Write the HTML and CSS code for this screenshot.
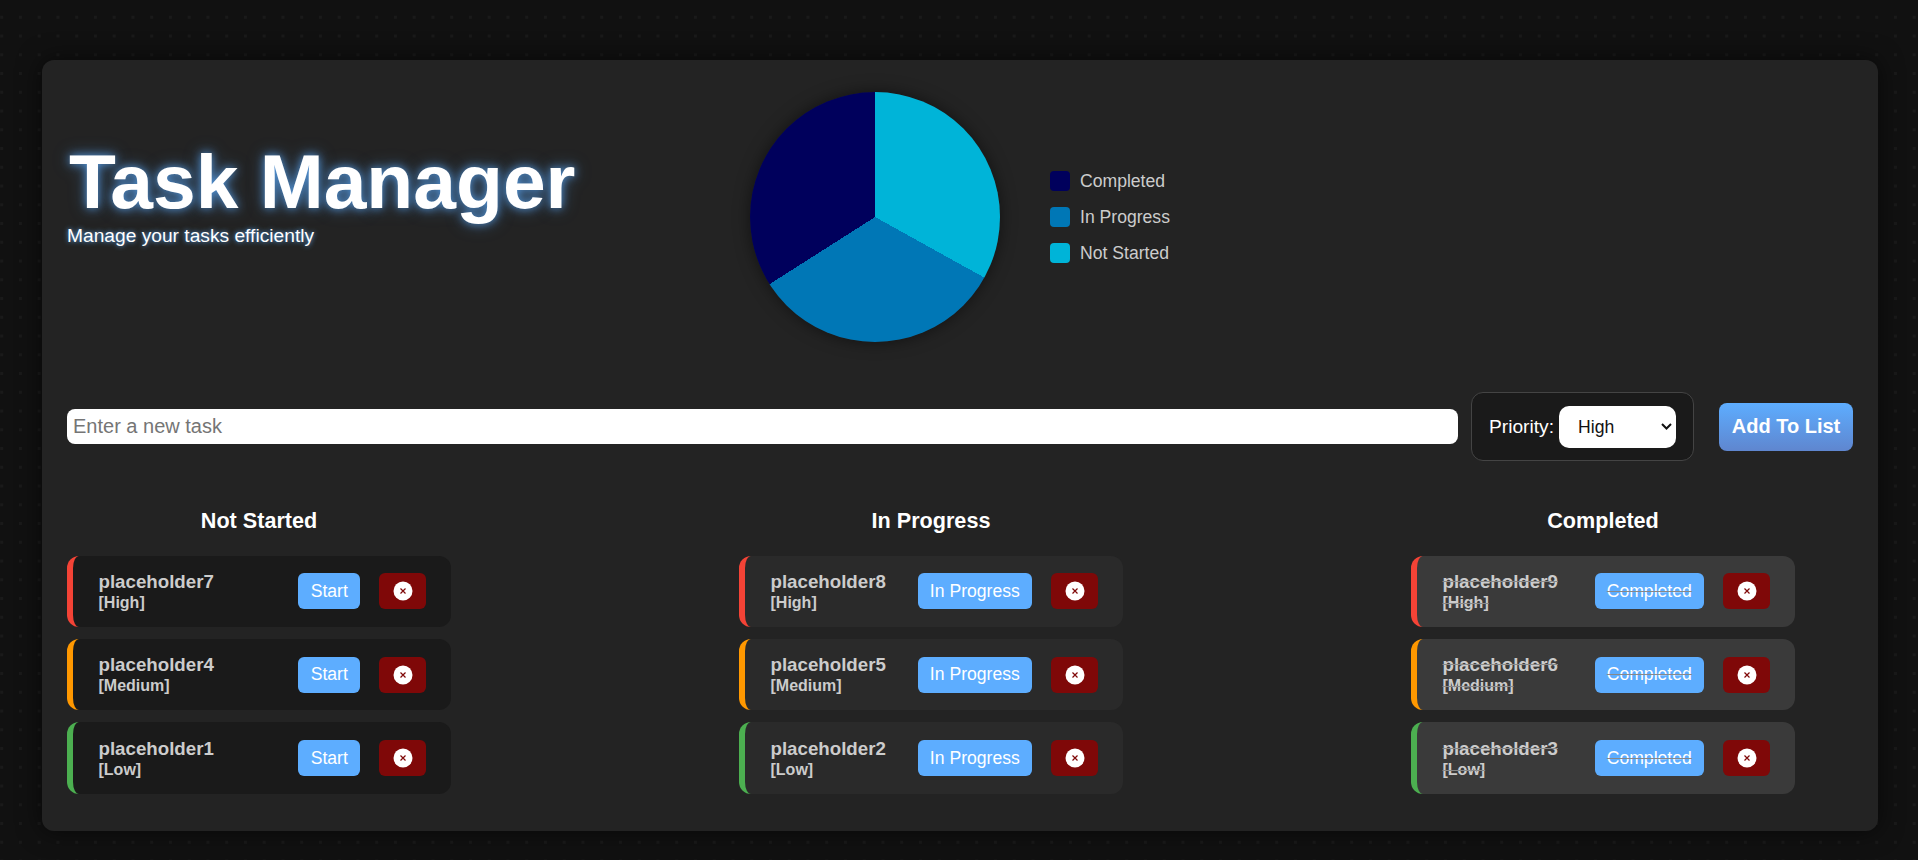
FILE: index.html
```html
<!DOCTYPE html>
<html lang="en">
<head>
    <meta charset="UTF-8">
    <meta name="viewport" content="width=device-width, initial-scale=1.0">
    <title>Task Manager</title>
    <link rel="stylesheet" href="styles.css">
</head>
<body>
    <div class="app-container">
        <header class="app-header">
            <div class="brand">
                <h1>Task Manager</h1>
                <p>Manage your tasks efficiently</p>
            </div>
            <div class="pie-chart"></div>
            <ul class="legend">
                <li><span class="swatch swatch-completed"></span>Completed</li>
                <li><span class="swatch swatch-progress"></span>In Progress</li>
                <li><span class="swatch swatch-new"></span>Not Started</li>
            </ul>
        </header>

        <form class="task-form">
            <input type="text" class="task-input" placeholder="Enter a new task">
            <div class="priority-box">
                <label for="priority">Priority:</label>
                <select id="priority">
                    <option>High</option>
                    <option>Medium</option>
                    <option>Low</option>
                </select>
            </div>
            <button type="button" class="add-btn">Add To List</button>
        </form>

        <div class="columns">
            <section class="column">
                <h2>Not Started</h2>
                <ul class="task-list">
                    <li class="task high">
                        <div class="task-text"><span class="task-name">placeholder7</span><span class="task-priority">[High]</span></div>
                        <button type="button" class="status-btn">Start</button>
                        <button type="button" class="delete-btn"><svg viewBox="0 0 20 20"><circle cx="10" cy="10" r="9.5" fill="#fff"/><path d="M7.5 7.5l5 5M12.5 7.5l-5 5" stroke="#7f0808" stroke-width="1.2"/></svg></button>
                    </li>
                    <li class="task medium">
                        <div class="task-text"><span class="task-name">placeholder4</span><span class="task-priority">[Medium]</span></div>
                        <button type="button" class="status-btn">Start</button>
                        <button type="button" class="delete-btn"><svg viewBox="0 0 20 20"><circle cx="10" cy="10" r="9.5" fill="#fff"/><path d="M7.5 7.5l5 5M12.5 7.5l-5 5" stroke="#7f0808" stroke-width="1.2"/></svg></button>
                    </li>
                    <li class="task low">
                        <div class="task-text"><span class="task-name">placeholder1</span><span class="task-priority">[Low]</span></div>
                        <button type="button" class="status-btn">Start</button>
                        <button type="button" class="delete-btn"><svg viewBox="0 0 20 20"><circle cx="10" cy="10" r="9.5" fill="#fff"/><path d="M7.5 7.5l5 5M12.5 7.5l-5 5" stroke="#7f0808" stroke-width="1.2"/></svg></button>
                    </li>
                </ul>
            </section>

            <section class="column in-progress">
                <h2>In Progress</h2>
                <ul class="task-list">
                    <li class="task high">
                        <div class="task-text"><span class="task-name">placeholder8</span><span class="task-priority">[High]</span></div>
                        <button type="button" class="status-btn">In Progress</button>
                        <button type="button" class="delete-btn"><svg viewBox="0 0 20 20"><circle cx="10" cy="10" r="9.5" fill="#fff"/><path d="M7.5 7.5l5 5M12.5 7.5l-5 5" stroke="#7f0808" stroke-width="1.2"/></svg></button>
                    </li>
                    <li class="task medium">
                        <div class="task-text"><span class="task-name">placeholder5</span><span class="task-priority">[Medium]</span></div>
                        <button type="button" class="status-btn">In Progress</button>
                        <button type="button" class="delete-btn"><svg viewBox="0 0 20 20"><circle cx="10" cy="10" r="9.5" fill="#fff"/><path d="M7.5 7.5l5 5M12.5 7.5l-5 5" stroke="#7f0808" stroke-width="1.2"/></svg></button>
                    </li>
                    <li class="task low">
                        <div class="task-text"><span class="task-name">placeholder2</span><span class="task-priority">[Low]</span></div>
                        <button type="button" class="status-btn">In Progress</button>
                        <button type="button" class="delete-btn"><svg viewBox="0 0 20 20"><circle cx="10" cy="10" r="9.5" fill="#fff"/><path d="M7.5 7.5l5 5M12.5 7.5l-5 5" stroke="#7f0808" stroke-width="1.2"/></svg></button>
                    </li>
                </ul>
            </section>

            <section class="column completed">
                <h2>Completed</h2>
                <ul class="task-list">
                    <li class="task high">
                        <div class="task-text"><span class="task-name">placeholder9</span><span class="task-priority">[High]</span></div>
                        <button type="button" class="status-btn">Completed</button>
                        <button type="button" class="delete-btn"><svg viewBox="0 0 20 20"><circle cx="10" cy="10" r="9.5" fill="#fff"/><path d="M7.5 7.5l5 5M12.5 7.5l-5 5" stroke="#7f0808" stroke-width="1.2"/></svg></button>
                    </li>
                    <li class="task medium">
                        <div class="task-text"><span class="task-name">placeholder6</span><span class="task-priority">[Medium]</span></div>
                        <button type="button" class="status-btn">Completed</button>
                        <button type="button" class="delete-btn"><svg viewBox="0 0 20 20"><circle cx="10" cy="10" r="9.5" fill="#fff"/><path d="M7.5 7.5l5 5M12.5 7.5l-5 5" stroke="#7f0808" stroke-width="1.2"/></svg></button>
                    </li>
                    <li class="task low">
                        <div class="task-text"><span class="task-name">placeholder3</span><span class="task-priority">[Low]</span></div>
                        <button type="button" class="status-btn">Completed</button>
                        <button type="button" class="delete-btn"><svg viewBox="0 0 20 20"><circle cx="10" cy="10" r="9.5" fill="#fff"/><path d="M7.5 7.5l5 5M12.5 7.5l-5 5" stroke="#7f0808" stroke-width="1.2"/></svg></button>
                    </li>
                </ul>
            </section>
        </div>
    </div>
</body>
</html>
```

FILE: styles.css
```css
* {
    margin: 0;
    padding: 0;
    box-sizing: border-box;
}

body {
    font-family: "Liberation Sans", Arial, sans-serif;
    background-color: #111;
    background-image: radial-gradient(circle, #1a1a1a 1.5px, transparent 2px);
    background-size: 18.75px 18.75px;
    background-position: -7.7px 7.9px;
    min-height: 100vh;
    padding: 60px 40px 29px 42px;
    color: #fff;
}

ul {
    list-style: none;
}

.app-container {
    background: #232323;
    border-radius: 12px;
    box-shadow: 0 0 24px rgba(0, 0, 0, 0.6);
    padding: 32px 25px 37px;
}

.app-header {
    display: flex;
    align-items: center;
}

.brand {
    width: 683px;
    margin-bottom: 51px;
}

.brand h1 {
    margin-left: 2px;
    font-size: 76.8px;
    font-weight: 700;
    line-height: 88px;
    text-shadow: 0 0 10px rgba(93, 173, 255, 0.8), 0 0 18px rgba(93, 173, 255, 0.35);
}

.brand p {
    font-size: 19.2px;
    text-shadow: 0 0 5px #5dadff;
}

.pie-chart {
    width: 250px;
    height: 250px;
    border-radius: 50%;
    background: conic-gradient(#00b4d8 0deg 119deg, #0077b6 119deg 237.5deg, #00005c 237.5deg 360deg);
    box-shadow: 0 0 16px rgba(0, 0, 0, 0.5);
}

.legend {
    margin-left: 50px;
    display: flex;
    flex-direction: column;
    gap: 16px;
    font-size: 17.6px;
    color: #ccc;
}

.legend li {
    display: flex;
    align-items: center;
    gap: 10px;
    height: 20px;
}

.swatch {
    width: 20px;
    height: 20px;
    border-radius: 4px;
}

.swatch-completed { background: #00005c; }
.swatch-progress { background: #0077b6; }
.swatch-new { background: #00b4d8; }

.task-form {
    display: flex;
    align-items: center;
    margin-top: 50px;
}

.task-input {
    flex: 1;
    height: 35px;
    padding: 0 6px;
    border: none;
    border-radius: 8px;
    background: #fff;
    font-family: inherit;
    font-size: 20px;
}

.priority-box {
    display: flex;
    align-items: center;
    gap: 5px;
    width: 223px;
    height: 69px;
    margin-left: 13px;
    padding: 0 17px;
    background: #1a1a1a;
    border: 1px solid #444;
    border-radius: 12px;
    font-size: 19.2px;
}

.priority-box select {
    width: 119px;
    height: 42px;
    padding-left: 19px;
    border: none;
    border-radius: 10px;
    background: #fff url("data:image/svg+xml,%3Csvg xmlns='http://www.w3.org/2000/svg' viewBox='0 0 11 7'%3E%3Cpath d='M1 1l4.5 4.5L10 1' fill='none' stroke='%23111' stroke-width='2'/%3E%3C/svg%3E") no-repeat right 4px center / 11px 7px;
    appearance: none;
    color: #111;
    font-family: inherit;
    font-size: 17.6px;
}

.add-btn {
    width: 134px;
    height: 48px;
    margin-left: 25px;
    border: none;
    border-radius: 8px;
    background: linear-gradient(180deg, #5dadff 0%, #5f86cf 100%);
    color: #fff;
    font-family: inherit;
    font-size: 20px;
    font-weight: 700;
}

.columns {
    display: flex;
    gap: 288px;
    margin-top: 47.7px;
}

.column {
    width: 384px;
}

.column h2 {
    font-size: 21.6px;
    font-weight: 700;
    line-height: 24px;
    text-align: center;
    margin-bottom: 23px;
}

.task-list {
    display: flex;
    flex-direction: column;
    gap: 12px;
}

.task {
    display: flex;
    align-items: center;
    gap: 19px;
    padding: 15.2px 25px 15.2px 25.5px;
    border-left: 6px solid;
    border-radius: 12px;
    background: #1a1a1a;
    color: #ccc;
}

.in-progress .task { background: #2a2a2a; }
.completed .task { background: #3a3a3a; }

.task.high { border-left-color: #f44336; }
.task.medium { border-left-color: #ff9800; }
.task.low { border-left-color: #4caf50; }

.task-text {
    display: flex;
    flex-direction: column;
    margin-right: auto;
    font-weight: 700;
}

.task-name {
    font-size: 18.72px;
    line-height: 22px;
}

.task-priority {
    font-size: 16px;
    line-height: 19px;
}

.completed .task-text span,
.completed .status-btn {
    text-decoration: line-through;
    text-decoration-color: #888;
}

.status-btn {
    height: 36px;
    padding: 0 12.2px;
    border: none;
    border-radius: 6px;
    background: #5dadff;
    color: #fff;
    font-family: inherit;
    font-size: 17.6px;
}

.delete-btn {
    display: flex;
    align-items: center;
    justify-content: center;
    width: 47px;
    height: 36px;
    border: none;
    border-radius: 6px;
    background: #7f0808;
}

.delete-btn svg {
    width: 20px;
    height: 20px;
}
```
